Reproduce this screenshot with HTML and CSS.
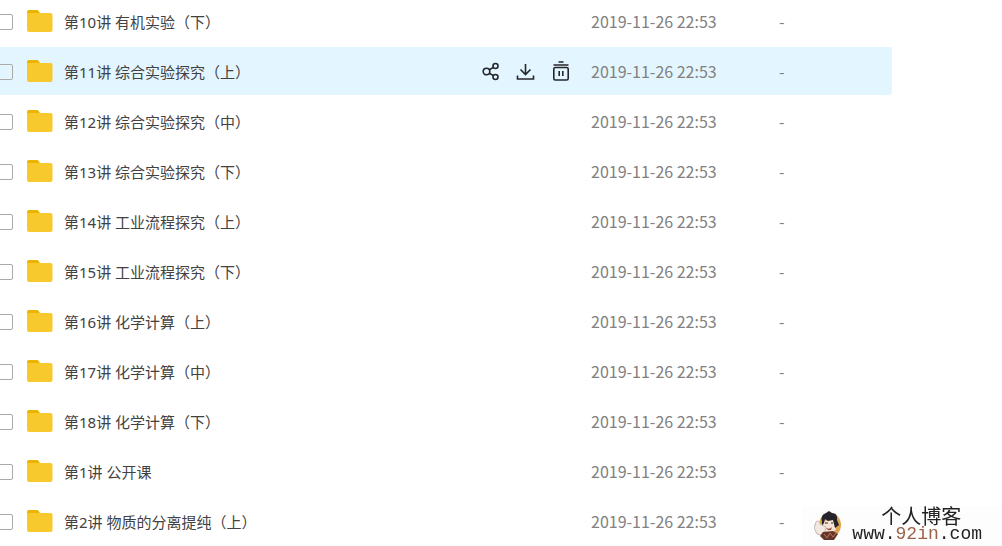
FILE: index.html
```html
<!DOCTYPE html>
<html lang="zh-CN">
<head>
    <meta charset="UTF-8">
    <meta name="viewport" content="width=device-width, initial-scale=1.0">
    <title>文件列表</title>
    <link rel="stylesheet" href="styles.css">
</head>
<body>
    <svg class="sprite" aria-hidden="true">
        <symbol id="folder" viewBox="0 0 26 22">
            <path d="M0 8V2Q0 0 2 0H10Q11 0 11.600 1L13 3V8Z" fill="#ebb400"/>
            <path d="M0 3H23.500Q25.500 3 25.500 5V20Q25.500 22 23.500 22H2Q0 22 0 20Z" fill="#f8c92c"/>
        </symbol>
    </svg>

    <main class="files">
        <table class="file-table">
            <tbody id="fileList"></tbody>
        </table>
    </main>

    <footer class="blog">
        <svg class="avatar" viewBox="0 0 28 30" aria-hidden="true">
            <ellipse cx="16" cy="14" rx="11" ry="12" fill="#dfa34d"/>
            <path d="M8 10L19 9L22 18L18 23L9 21Z" fill="#f5e3d5"/>
            <path d="M8 11Q6 4 12 2L15 0L18 2Q24 2 23 9L25 14L21 17L19 9L14 10L11 8L10 12L8 15Z" fill="#25242a"/>
            <path d="M2 11Q5 8 6 13L12 16L10 25L3 23L0 17Z" fill="#f2e8df" stroke="#c6b8ad"/>
            <path d="M11 12H14M17 12H19" stroke="#3b2a29"/>
            <path d="M12 17Q16 19 18 16L17 19H14Z" fill="#934337"/>
            <path d="M9 21L19 20L24 23L20 29H10L6 25Z" fill="#63352b"/>
            <path d="M10 23L13 27L16 22L19 26L22 22" fill="none" stroke="#bd7753"/>
        </svg>
        <div class="blog-text">
            <span class="blog-name">个人博客</span>
            <span class="blog-url">www.<span class="blog-domain">92in</span>.com</span>
        </div>
    </footer>

    <script src="script.js"></script>
</body>
</html>
```

FILE: styles.css
```css
body {
    margin: 0;
    min-height: 100vh;
    overflow: hidden;
    background-color: #ffffff;
    font-family: "Noto Sans CJK SC", sans-serif;
}
.sprite {
    display: none;
}
/* list is scrolled a little up and to the left */
.files {
    height: 100vh;
    margin: -5px 110px 0 -16px;
}
.file-table {
    width: 100%;
    table-layout: fixed;
    border-collapse: separate;
    border-spacing: 0 2px;
}
td {
    height: 48px;
    padding: 0;
    font-size: 16px;
    line-height: 24px;
    color: #818181;
}
.check {
    width: 43px;
}
.date {
    width: 188px;
}
.size {
    width: 113px;
    border-radius: 0 3px 3px 0;
}
.selected td {
    background-color: #e3f5fe;
}
input {
    display: block;
    appearance: none;
    box-sizing: border-box;
    width: 16px;
    height: 16px;
    margin: 2px 0 0 13px;
    border: 1px solid #aaaaaa;
    border-radius: 2px;
}
.name-cell {
    display: flex;
    align-items: center;
}
.folder {
    width: 26px;
    height: 22px;
    margin-right: 11px;
}
.name-cell label {
    padding-top: 2px;
    font-family: "Noto Sans", "Noto Sans CJK SC", sans-serif;
    font-size: 15px;
    color: #424242;
    white-space: pre;
}
.actions {
    display: flex;
    gap: 15px;
    margin-left: auto;
    margin-right: 20px;
}
.actions button {
    display: block;
    width: 20px;
    height: 20px;
    padding: 0;
    border: none;
    background: none;
    color: #25262b;
    cursor: pointer;
}
.actions svg {
    display: block;
    width: 20px;
    height: 20px;
    fill: none;
    stroke: currentColor;
    stroke-width: 1.6;
}
.blog {
    position: fixed;
    right: 0;
    bottom: 0;
    display: flex;
    align-items: center;
    gap: 10px;
    padding: 0 20px 0 12px;
    background-color: #fdfdfd;
}
.avatar {
    width: 28px;
    height: 30px;
}
.blog-text {
    display: flex;
    flex-direction: column;
    align-items: center;
    padding-bottom: 4px;
    color: #222222;
}
.blog-name {
    padding-left: 8px;
    font-size: 20px;
    line-height: 20px;
}
.blog-url {
    font-family: "Liberation Mono", monospace;
    font-size: 18px;
    line-height: 16px;
}
.blog-domain {
    color: #9a6248;
}
```

FILE: script.js
```js
const files = [
    '第10讲 有机实验（下）',
    '第11讲 综合实验探究（上）',
    '第12讲 综合实验探究（中）',
    '第13讲 综合实验探究（下）',
    '第14讲 工业流程探究（上）',
    '第15讲 工业流程探究（下）',
    '第16讲 化学计算（上）',
    '第17讲 化学计算（中）',
    '第18讲 化学计算（下）',
    '第1讲 公开课',
    '第2讲 物质的分离提纯（上）'
];
const hovered = 1;

// Share, download and delete buttons of the hovered row
const actions = `
    <div class="actions">
        <button type="button" aria-label="分享">
            <svg viewBox="0 0 20 20">
                <circle cx="5.500" cy="10.500" r="3.300"/>
                <circle cx="14.500" cy="5" r="2.500"/>
                <circle cx="14.500" cy="16" r="2.500"/>
                <path d="M8.400 8.800L12.300 6.400M8.400 12.200L12.300 14.600"/>
            </svg>
        </button>
        <button type="button" aria-label="下载">
            <svg viewBox="0 0 20 20">
                <path d="M9.500 3V13M4.500 8.500L9.500 13.500L14.500 8.500M1.500 14.500V18H17.500V14.500"/>
            </svg>
        </button>
        <button type="button" aria-label="删除">
            <svg viewBox="0 0 20 20">
                <path d="M7.500 1H12.500M2.500 4H17.500M8.200 10V15M11.800 10V15"/>
                <rect x="2.800" y="6.500" width="14.400" height="12.500" rx="1.500"/>
            </svg>
        </button>
    </div>`;

document.getElementById('fileList').innerHTML = files.map((name, i) => `
    <tr class="${i === hovered ? 'selected' : ''}">
        <td class="check"><input type="checkbox" id="file${i}"></td>
        <td>
            <div class="name-cell">
                <svg class="folder" aria-hidden="true"><use href="#folder"/></svg>
                <label for="file${i}">${name}</label>
                ${i === hovered ? actions : ''}
            </div>
        </td>
        <td class="date">2019-11-26 22:53</td>
        <td class="size">-</td>
    </tr>`).join('');
```
